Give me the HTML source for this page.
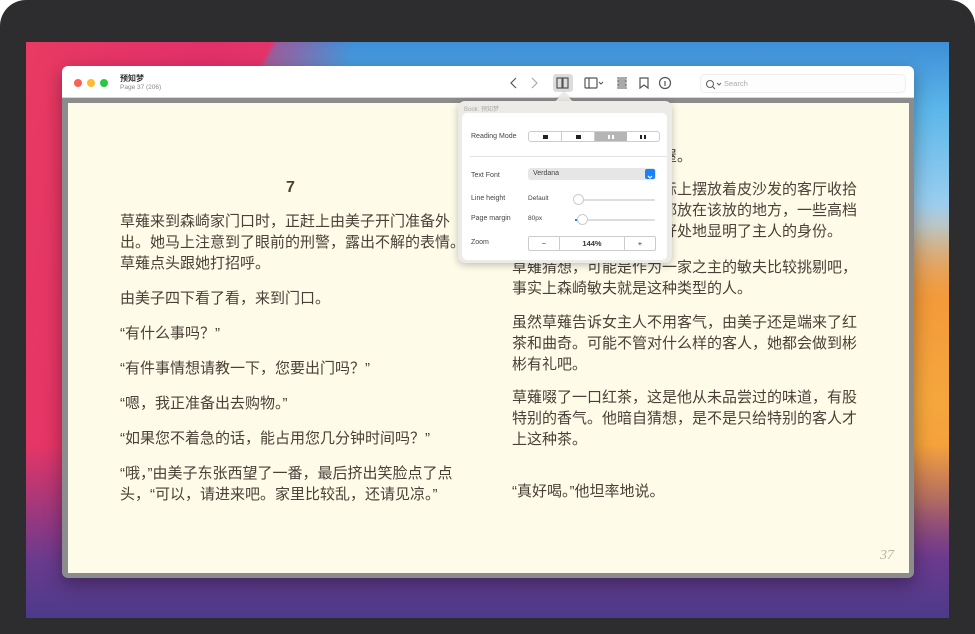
<!DOCTYPE html>
<html><head><meta charset="utf-8"><style>
*{margin:0;padding:0;box-sizing:border-box}
body{width:975px;height:634px;background:#fff;position:relative;overflow:hidden;font-family:"Liberation Sans","Noto Sans CJK SC",sans-serif}
.bezel{position:absolute;left:0;top:0;width:975px;height:634px;background:#2d2d2f;border-radius:26px 26px 0 0}
.screen{position:absolute;left:26px;top:42px;width:923px;height:576px;overflow:hidden;
background:
radial-gradient(ellipse 420px 200px at 880px 360px,#f6a83e 0%,#f39a3a 50%,rgba(243,120,60,0) 100%),
linear-gradient(180deg,#3e8fd8 0%,#5cb7ea 12%,#a9d3f0 32%,#f0963e 48%,#f06a4a 62%,#e6245e 78%,#b52a7c 100%)}
.lt{position:absolute;left:0;top:0;width:923px;height:576px;background:linear-gradient(100deg,#e83a62 0%,#e2306a 18%,rgba(226,48,106,0) 32%)}
.tp{position:absolute;left:0;top:0;width:923px;height:576px;background:linear-gradient(118deg,#ea3a60 0%,#e8386a 20%,rgba(0,0,0,0) 20.5%)}
.bt{position:absolute;left:0;top:0;width:923px;height:576px;background:linear-gradient(0deg,#4c3a8a 0%,#6a3a8e 10%,rgba(130,50,130,0) 30%)}
.win{position:absolute;left:62px;top:66px;width:852px;height:512px;background:#8c8c8c;border-radius:6px;box-shadow:0 6px 18px rgba(0,0,0,.35)}
.tb{position:absolute;left:0;top:0;width:852px;height:32px;background:#fff;border-radius:6px 6px 0 0;border-bottom:1px solid #d8d8d8}
.dot{position:absolute;top:13px;width:8px;height:8px;border-radius:50%}
.page{position:absolute;left:6px;top:37px;width:841px;height:470px;background:#fefce9}
.t{position:absolute;font-size:15px;color:#4a4038;white-space:nowrap;line-height:21px;font-family:"Liberation Sans","Noto Sans CJK SC",sans-serif}
.pop{position:absolute;left:458px;top:101px;width:214px;height:162px;background:#ecebe7;border-radius:7px;box-shadow:0 2px 8px rgba(0,0,0,.25)}
.in{position:absolute;left:4px;top:12px;width:205px;height:147px;background:#fff;border-radius:5px;overflow:hidden}
.s{position:absolute;font-size:7px;color:#444;white-space:nowrap}
</style></head><body>
<div class="bezel"></div>
<div class="screen"><div class="tp"></div><div class="lt"></div><div class="bt"></div></div>
<div class="win">
 <div class="tb">
  <div class="dot" style="left:12px;background:#fe5f57"></div>
  <div class="dot" style="left:25px;background:#febc2e"></div>
  <div class="dot" style="left:38px;background:#28c840"></div>
  <div style="position:absolute;left:58px;top:7px;font-size:8px;font-weight:bold;color:#333">预知梦</div>
  <div style="position:absolute;left:58px;top:18px;font-size:6.5px;color:#888">Page 37 (206)</div>
  <svg style="position:absolute;left:440px;top:8px" width="180" height="18" viewBox="0 0 180 18" fill="none" stroke="#555" stroke-width="1.2">
   <path d="M14 4 L9 9 L14 14"/>
   <path d="M30 4 L35 9 L30 14" stroke="#aaa"/>
   <rect x="51" y="0" width="20" height="18" rx="3" fill="#dcdcdc" stroke="none"/>
   <path d="M55 4 h5 v10 h-5 z M61 4 h5 v10 h-5 z"/>
   <rect x="83" y="4" width="12" height="10" rx="1"/><path d="M87 4 v10"/><path d="M97 8 l2 2 l2 -2" stroke-width="1"/>
   <path d="M115 4 h10 M115 14 h10 M116 6 h8 v2 h-8z M116 10 h8 v2 h-8z" stroke-width="1"/>
   <path d="M138 4 h8 v10 l-4 -3 l-4 3 z"/>
   <circle cx="163" cy="9" r="5.5"/><path d="M163 7 v5"/>
  </svg>
  <div style="position:absolute;left:638px;top:8px;width:206px;height:19px;border:1px solid #eee;border-radius:5px;background:#fdfdfd">
   <svg style="position:absolute;left:4px;top:4px" width="18" height="11" fill="none" stroke="#666" stroke-width="1.1"><circle cx="5" cy="5" r="3.5"/><path d="M7.5 7.5 L10 10 M12 4 l2 2 l2 -2"/></svg>
   <span style="position:absolute;left:23px;top:4px;font-size:7.5px;color:#aaa">Search</span>
  </div>
 </div>
 <div class="page">
  <div style="position:absolute;left:218px;top:76px;font-size:16px;font-weight:bold;color:#4a4038">7</div>
  <div class="t" style="left:52px;top:108px">草薙来到森崎家门口时，正赶上由美子开门准备外</div>
  <div class="t" style="left:52px;top:129px">出。她马上注意到了眼前的刑警，露出不解的表情。</div>
  <div class="t" style="left:52px;top:150px">草薙点头跟她打招呼。</div>
  <div class="t" style="left:52px;top:185px">由美子四下看了看，来到门口。</div>
  <div class="t" style="left:52px;top:220px">“有什么事吗？”</div>
  <div class="t" style="left:52px;top:255px">“有件事情想请教一下，您要出门吗？”</div>
  <div class="t" style="left:52px;top:290px">“嗯，我正准备出去购物。”</div>
  <div class="t" style="left:52px;top:325px">“如果您不着急的话，能占用您几分钟时间吗？”</div>
  <div class="t" style="left:52px;top:360px">“哦，”由美子东张西望了一番，最后挤出笑脸点了点</div>
  <div class="t" style="left:52px;top:381px">头，“可以，请进来吧。家里比较乱，还请见凉。”</div>
  <div class="t" style="left:444px;top:43px">草薙随她在玄关脱鞋进屋。</div>
  <div class="t" style="left:444px;top:76px">房子装饰得很讲究，实际上摆放着皮沙发的客厅收拾</div>
  <div class="t" style="left:444px;top:97px">得很整洁，所有的东西都放在该放的地方，一些高档</div>
  <div class="t" style="left:444px;top:118px">的摆设和装饰家具恰到好处地显明了主人的身份。</div>
  <div class="t" style="left:444px;top:154px">草薙猜想，可能是作为一家之主的敏夫比较挑剔吧，</div>
  <div class="t" style="left:444px;top:175px">事实上森崎敏夫就是这种类型的人。</div>
  <div class="t" style="left:444px;top:209px">虽然草薙告诉女主人不用客气，由美子还是端来了红</div>
  <div class="t" style="left:444px;top:230px">茶和曲奇。可能不管对什么样的客人，她都会做到彬</div>
  <div class="t" style="left:444px;top:251px">彬有礼吧。</div>
  <div class="t" style="left:444px;top:284px">草薙啜了一口红茶，这是他从未品尝过的味道，有股</div>
  <div class="t" style="left:444px;top:305px">特别的香气。他暗自猜想，是不是只给特别的客人才</div>
  <div class="t" style="left:444px;top:326px">上这种茶。</div>
  <div class="t" style="left:444px;top:378px">“真好喝。”他坦率地说。</div>
  <div style="position:absolute;left:812px;top:445px;font-family:'Liberation Serif',serif;font-style:italic;font-size:14px;color:#b8b4a8">37</div>
 </div>
</div>
<div style="position:absolute;left:558px;top:95px;width:12px;height:12px;background:#ecebe7;transform:rotate(45deg);box-shadow:-1px -1px 2px rgba(0,0,0,.1)"></div>
<div class="pop">
 <div class="s" style="left:6px;top:3px;font-size:6px;color:#aaa">Book: 预知梦</div>
 <div class="in">
  <div class="s" style="left:9px;top:20px">Reading Mode</div>
  <div style="position:absolute;left:66px;top:18px;width:132px;height:11px;border:1px solid #ccc;border-radius:3px;display:flex;overflow:hidden">
   <div style="flex:1;border-right:1px solid #ccc;position:relative"><i style="position:absolute;left:14px;top:3px;width:5px;height:4px;background:#222"></i></div>
   <div style="flex:1;border-right:1px solid #ccc;position:relative"><i style="position:absolute;left:14px;top:3px;width:5px;height:4px;background:#222"></i></div>
   <div style="flex:1;background:#b5b5b5;position:relative"><i style="position:absolute;left:13px;top:3px;width:2px;height:4px;background:#fff"></i><i style="position:absolute;left:17px;top:3px;width:2px;height:4px;background:#fff"></i></div>
   <div style="flex:1;position:relative"><i style="position:absolute;left:13px;top:3px;width:2px;height:4px;background:#222"></i><i style="position:absolute;left:17px;top:3px;width:2px;height:4px;background:#222"></i></div>
  </div>
  <div style="position:absolute;left:8px;top:43px;width:197px;height:1px;background:#e2e2e2"></div>
  <div class="s" style="left:9px;top:59px">Text Font</div>
  <div style="position:absolute;left:66px;top:55px;width:128px;height:12px;background:#e6e6e6;border-radius:3px"><span class="s" style="left:5px;top:2px">Verdana</span><div style="position:absolute;right:1px;top:1px;width:10px;height:10px;background:#1a82f8;border-radius:2px"><svg width="10" height="10" fill="none" stroke="#fff" stroke-width="1.2"><path d="M3 4 l2 2 l2 -2"/></svg></div></div>
  <div class="s" style="left:9px;top:82px">Line height</div>
  <div class="s" style="left:66px;top:82px;font-size:6.5px">Default</div>
  <div style="position:absolute;left:114px;top:86px;width:79px;height:2px;background:#ddd;border-radius:1px"></div>
  <div style="position:absolute;left:111px;top:81px;width:11px;height:11px;border-radius:50%;background:#fff;border:1px solid #ccc"></div>
  <div class="s" style="left:9px;top:102px">Page margin</div>
  <div class="s" style="left:66px;top:102px;font-size:6.5px">80px</div>
  <div style="position:absolute;left:114px;top:106px;width:79px;height:2px;background:#ddd;border-radius:1px"></div>
  <div style="position:absolute;left:113px;top:106px;width:3px;height:2px;background:#1a82f8"></div>
  <div style="position:absolute;left:115px;top:101px;width:11px;height:11px;border-radius:50%;background:#fff;border:1px solid #ccc"></div>
  <div class="s" style="left:9px;top:126px">Zoom</div>
  <div style="position:absolute;left:66px;top:123px;width:128px;height:15px;border:1px solid #ccc;border-radius:2px;display:flex;font-size:7.5px;color:#333;text-align:center;line-height:13px">
   <div style="width:31px;border-right:1px solid #ccc">−</div><div style="flex:1;border-right:1px solid #ccc;font-weight:bold">144%</div><div style="width:30px">+</div>
  </div>
 </div>
</div>
</body></html>
